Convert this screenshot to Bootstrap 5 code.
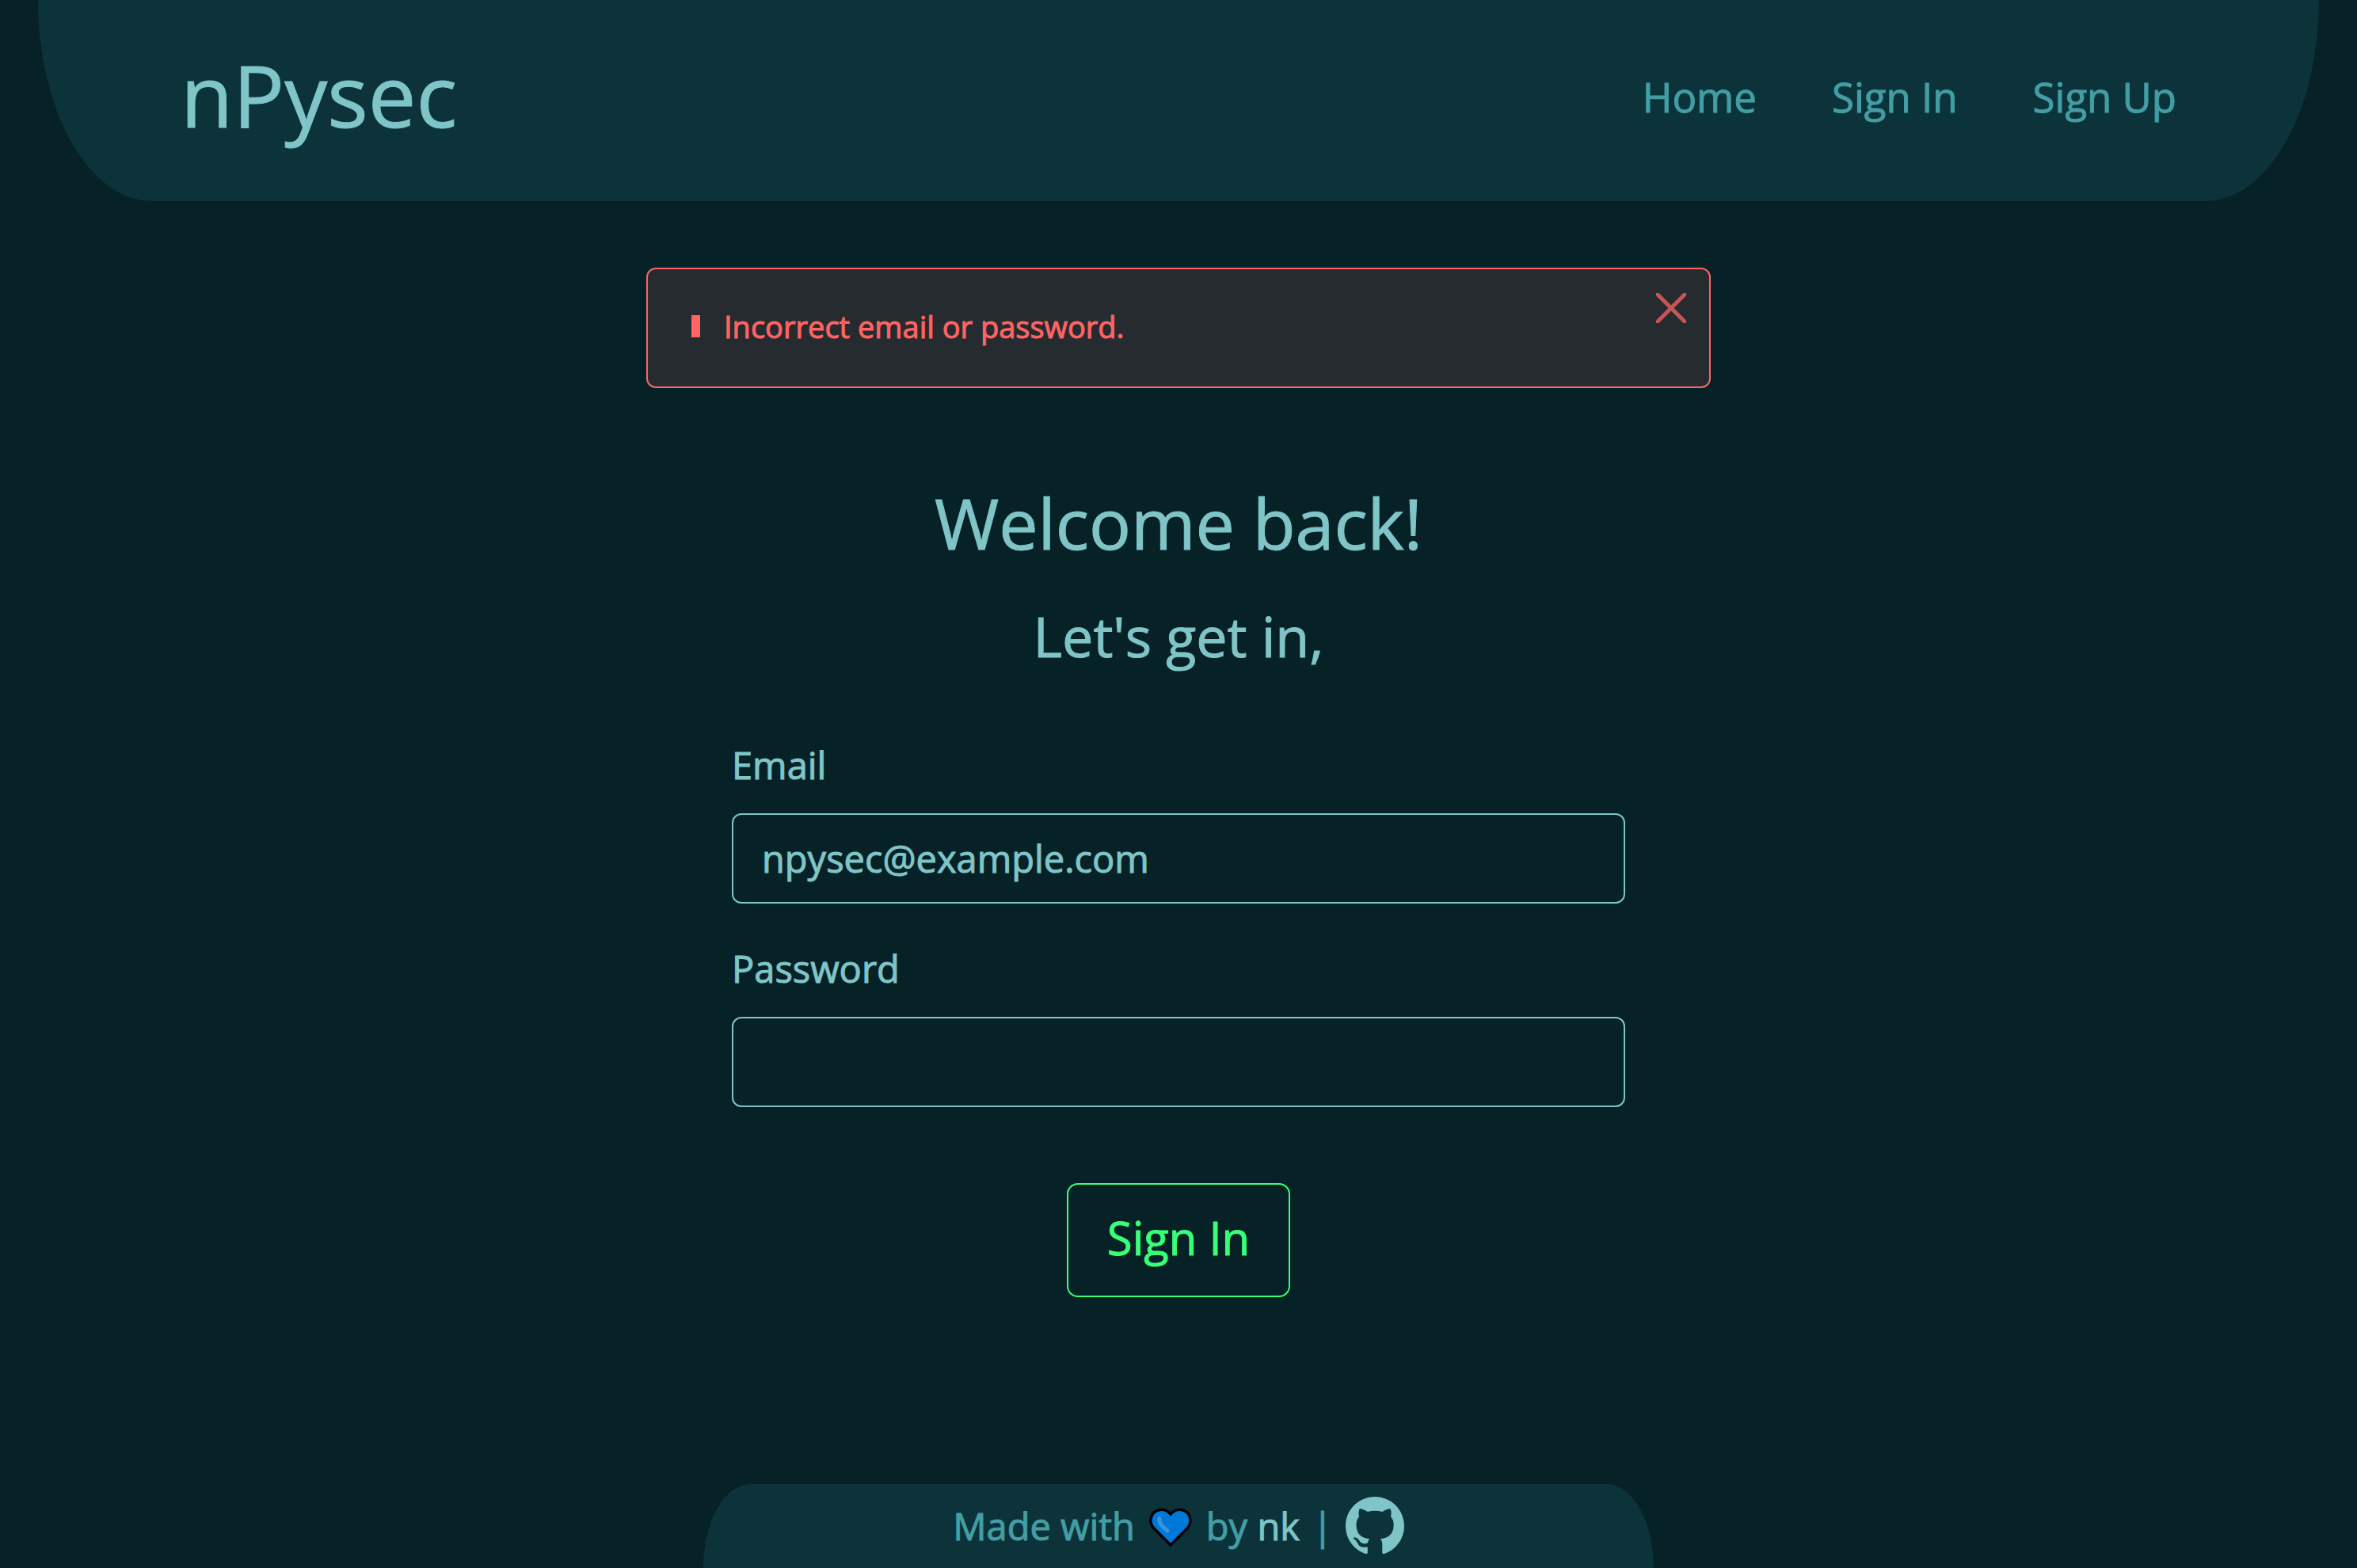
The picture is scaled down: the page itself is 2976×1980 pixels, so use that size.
<!DOCTYPE html>
<html lang="en">
<head>
<meta charset="utf-8">
<meta name="viewport" content="width=device-width, initial-scale=1">
<title>nPysec - Sign In</title>
<link href="https://cdn.jsdelivr.net/npm/bootstrap@5.3.0/dist/css/bootstrap.min.css" rel="stylesheet">
<style>
  :root {
    --ink: #072227;
    --panel: #0c333a;
    --teal: #429ea4;
    --pale: #7fc4c7;
    --danger: #ff6363;
    --go: #37ff77;
  }
  body {
    background: var(--ink);
    color: var(--pale);
    font-family: "Open Sans", "Noto Sans", sans-serif;
    font-size: 47px;
    line-height: 70px;
    -webkit-text-stroke: 1px currentColor;
  }
  .site-header {
    background: var(--panel);
    border-radius: 0 0 5% 5% / 0 0 100% 100%;
    padding: 38px 180px 52px;
  }
  .site-header .navbar-brand {
    color: var(--pale);
    font-size: 108px;
    line-height: 164px;
  }
  .site-header .navbar-nav { gap: 95px; padding-top: 4px; }
  .site-header .nav-link {
    color: var(--teal);
    font-size: 51px;
    line-height: 70px;
  }
  .page-main { padding: 84px 0; }
  .flash {
    max-width: 1344px;
    padding: 42px 55px 46px;
    gap: 30px;
    background: #262b2f;
    border: 2px solid var(--danger);
    border-radius: 12px;
    color: var(--danger);
    font-size: 38px;
    line-height: 60px;
  }
  .flash-mark {
    width: 11px;
    height: 28px;
    background: var(--danger);
  }
  .flash-close {
    top: 30px;
    right: 29px;
    width: 38px;
    height: 38px;
    color: var(--danger);
    opacity: .75;
    line-height: 1;
  }
  .title-main { font-size: 88px; line-height: 106px; margin: 117px 0 48px; }
  .title-sub { font-size: 70px; line-height: 84px; margin: 0 0 86px; }
  .login-form { max-width: 1128px; }
  .login-form .form-label { margin-bottom: 26px; }
  .login-form .form-control {
    height: 114px;
    padding: 20px 36px;
    background: transparent;
    border: 2px solid var(--pale);
    border-radius: 12px;
    color: var(--pale);
    font-size: 47px;
    line-height: 70px;
  }
  .form-field { margin-bottom: 47px; }
  .btn-go {
    --bs-btn-color: var(--go);
    --bs-btn-hover-color: var(--ink);
    --bs-btn-hover-bg: var(--go);
    margin-top: 49px;
    padding: 32px 49px 38px;
    border: 2px solid var(--go);
    border-radius: 14px;
    font-size: 58px;
    line-height: 70px;
  }
  .site-footer {
    width: 100%;
    max-width: 1200px;
    padding: 16px 0;
    gap: 16px;
    background: var(--panel);
    border-radius: 5% 5% 0 0 / 100% 100% 0 0;
    color: var(--teal);
    line-height: 74px;
  }
  .site-footer a { color: var(--pale); }
  .heart { width: 54px; height: 50px; margin: 4px 2px 0; }
  .octo { width: 74px; height: 74px; }
</style>
</head>
<body class="d-flex flex-column min-vh-100">

<header class="site-header navbar navbar-expand mx-5 justify-content-between align-items-center">
  <a class="navbar-brand p-0 m-0" href="#">nPysec</a>
  <nav aria-label="Main">
    <ul class="navbar-nav">
      <li class="nav-item"><a class="nav-link p-0" href="#">Home</a></li>
      <li class="nav-item"><a class="nav-link p-0" href="#">Sign In</a></li>
      <li class="nav-item"><a class="nav-link p-0" href="#">Sign Up</a></li>
    </ul>
  </nav>
</header>

<main class="page-main container-fluid d-flex flex-column align-items-center">
  <div class="flash position-relative d-flex align-items-center w-100" role="alert">
    <span class="flash-mark" aria-hidden="true"></span>
    <span>Incorrect email or password.</span>
    <button type="button" class="flash-close btn position-absolute p-0 border-0 d-flex" aria-label="Close">
      <svg viewBox="0 0 38 38" width="38" height="38" fill="none" stroke="currentColor" stroke-width="5" stroke-linecap="round" aria-hidden="true">
        <path d="M2 2L36 36M36 2L2 36"/>
      </svg>
    </button>
  </div>

  <h1 class="title-main fw-normal text-center">Welcome back!</h1>
  <h2 class="title-sub fw-normal text-center">Let's get in,</h2>

  <form class="login-form w-100">
    <div class="form-field">
      <label class="form-label d-block p-0" for="email">Email</label>
      <input class="form-control" type="email" id="email" value="npysec@example.com">
    </div>
    <div class="form-field">
      <label class="form-label d-block p-0" for="password">Password</label>
      <input class="form-control" type="password" id="password">
    </div>
    <div class="text-center">
      <button class="btn btn-go" type="submit">Sign In</button>
    </div>
  </form>
</main>

<footer class="site-footer d-flex justify-content-center align-items-center mt-auto mx-auto">
  <span>Made with</span>
  <svg class="heart" viewBox="0 0 54 50" role="img" aria-label="blue heart">
    <path d="M27 47L6.500 26.500C-1 19 1.500 8 9 4C15.500 .5 22.500 2.500 27 8C31.500 2.500 38.500 .5 45 4C52.500 8 55 19 47.500 26.500Z" fill="#0078d7" stroke="#000" stroke-width="3.500"/>
    <path d="M13 13.500C12.500 18 14 20.500 16.500 23L23 29" fill="none" stroke="#3d93dd" stroke-width="5" stroke-linecap="round" stroke-linejoin="round"/>
  </svg>
  <span>by <a class="text-decoration-none" href="#">nk</a></span>
  <span>|</span>
  <a class="d-flex" href="#" aria-label="GitHub">
    <svg class="octo" viewBox="0 0 16 16" fill="currentColor" aria-hidden="true">
      <path d="M8 0C3.580 0 0 3.580 0 8c0 3.540 2.290 6.530 5.470 7.590.4.070.55-.170.55-.380 0-.190-.010-.820-.010-1.490-2.010.370-2.530-.490-2.690-.940-.090-.230-.480-.940-.820-1.130-.280-.150-.680-.520-.010-.530.630-.010 1.080.580 1.230.820.720 1.210 1.870.870 2.330.660.070-.520.280-.870.510-1.070-1.780-.2-3.640-.890-3.640-3.950 0-.870.310-1.590.820-2.150-.080-.2-.360-1.020.080-2.120 0 0 .670-.210 2.200.820.640-.180 1.320-.270 2-.270.680 0 1.360.090 2 .270 1.530-1.040 2.200-.820 2.200-.820.440 1.100.160 1.920.080 2.120.510.560.820 1.270.820 2.150 0 3.070-1.870 3.750-3.650 3.950.290.250.540.730.540 1.480 0 1.070-.010 1.930-.010 2.200 0 .210.150.460.550.380A8.013 8.013 0 0 0 16 8c0-4.420-3.580-8-8-8z"/>
    </svg>
  </a>
</footer>

<script src="https://cdn.jsdelivr.net/npm/bootstrap@5.3.0/dist/js/bootstrap.bundle.min.js"></script>
</body>
</html>
